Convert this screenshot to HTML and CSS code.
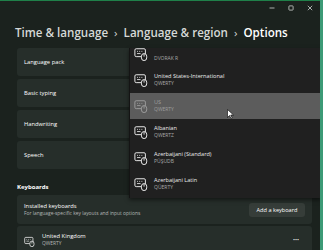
FILE: index.html
```html
<!DOCTYPE html>
<html lang="en">
<head>
    <meta charset="UTF-8">
    <meta name="viewport" content="width=device-width, initial-scale=1.0">
    <title>Options</title>
    <link rel="stylesheet" href="styles.css">
</head>
<body>
    <div class="window">
        <div class="titlebar">
            <svg class="ctl" width="6" height="6" viewBox="0 0 6 6"><path d="M0.5 3h5" stroke="#cfd3d1" stroke-width="0.8"/></svg>
            <svg class="ctl" width="6" height="6" viewBox="0 0 6 6"><rect x="0.9" y="0.9" width="4.2" height="4.2" rx="0.6" fill="none" stroke="#cfd3d1" stroke-width="0.8"/></svg>
            <svg class="ctl" width="6" height="6" viewBox="0 0 6 6"><path d="M0.8 0.8l4.4 4.4M5.2 0.8l-4.4 4.4" stroke="#cfd3d1" stroke-width="0.8"/></svg>
        </div>

        <h1 class="crumbs">
            <span class="crumb">Time &amp; language</span>
            <span class="sep">›</span>
            <span class="crumb">Language &amp; region</span>
            <span class="sep">›</span>
            <span class="crumb current">Options</span>
        </h1>

        <div class="content">
            <div class="card">Language pack</div>
            <div class="card">Basic typing</div>
            <div class="card">Handwriting</div>
            <div class="card">Speech</div>

            <h2 class="section">Keyboards</h2>

            <div class="card card-tall">
                <div class="text">
                    <div class="title">Installed keyboards</div>
                    <div class="sub">For language-specific key layouts and input options</div>
                </div>
                <button class="btn">Add a keyboard</button>
            </div>

            <div class="card card-item">
                <svg class="kb" width="11" height="11" viewBox="0 0 16 16">
                    <rect x="1" y="2" width="12" height="9" rx="1.5" fill="none" stroke="#e6e6e6" stroke-width="1.2"/>
                    <path d="M3.5 5h1M6 5h1M8.5 5h1M3.5 7.5h4" stroke="#e6e6e6" stroke-width="1"/>
                    <rect x="8.5" y="7.5" width="6" height="8" rx="3" fill="#27302b" stroke="#e6e6e6" stroke-width="1.2"/>
                    <path d="M11.5 8v3" stroke="#e6e6e6" stroke-width="1"/>
                </svg>
                <div class="text">
                    <div class="title">United Kingdom</div>
                    <div class="sub">QWERTY</div>
                </div>
                <span class="more">···</span>
            </div>
        </div>

        <div class="flyout">
            <div class="list">
                <div class="row partial">
                    <svg class="kb" width="14" height="14" viewBox="0 0 16 16"><rect x="1" y="2" width="12" height="9" rx="1.5" fill="none" stroke="currentColor" stroke-width="1.1"/><path d="M3.5 5h1M6 5h1M8.5 5h1M3.5 7.5h4" stroke="currentColor" stroke-width="1"/><rect x="8.5" y="7.5" width="6" height="8" rx="3" fill="#202020" stroke="currentColor" stroke-width="1.1"/><path d="M11.5 8v3" stroke="currentColor" stroke-width="1"/></svg>
                    <div class="text"><div class="sub">DVORAK R</div></div>
                </div>
                <div class="row">
                    <svg class="kb" width="14" height="14" viewBox="0 0 16 16"><rect x="1" y="2" width="12" height="9" rx="1.5" fill="none" stroke="currentColor" stroke-width="1.1"/><path d="M3.5 5h1M6 5h1M8.5 5h1M3.5 7.5h4" stroke="currentColor" stroke-width="1"/><rect x="8.5" y="7.5" width="6" height="8" rx="3" fill="#202020" stroke="currentColor" stroke-width="1.1"/><path d="M11.5 8v3" stroke="currentColor" stroke-width="1"/></svg>
                    <div class="text"><div class="title">United States-International</div><div class="sub">QWERTY</div></div>
                </div>
                <div class="row active">
                    <svg class="kb" width="14" height="14" viewBox="0 0 16 16"><rect x="1" y="2" width="12" height="9" rx="1.5" fill="none" stroke="currentColor" stroke-width="1.1"/><path d="M3.5 5h1M6 5h1M8.5 5h1M3.5 7.5h4" stroke="currentColor" stroke-width="1"/><rect x="8.5" y="7.5" width="6" height="8" rx="3" fill="#5c5c5c" stroke="currentColor" stroke-width="1.1"/><path d="M11.5 8v3" stroke="currentColor" stroke-width="1"/></svg>
                    <div class="text"><div class="title">US</div><div class="sub">QWERTY</div></div>
                </div>
                <div class="row">
                    <svg class="kb" width="14" height="14" viewBox="0 0 16 16"><rect x="1" y="2" width="12" height="9" rx="1.5" fill="none" stroke="currentColor" stroke-width="1.1"/><path d="M3.5 5h1M6 5h1M8.5 5h1M3.5 7.5h4" stroke="currentColor" stroke-width="1"/><rect x="8.5" y="7.5" width="6" height="8" rx="3" fill="#202020" stroke="currentColor" stroke-width="1.1"/><path d="M11.5 8v3" stroke="currentColor" stroke-width="1"/></svg>
                    <div class="text"><div class="title">Albanian</div><div class="sub">QWERTZ</div></div>
                </div>
                <div class="row">
                    <svg class="kb" width="14" height="14" viewBox="0 0 16 16"><rect x="1" y="2" width="12" height="9" rx="1.5" fill="none" stroke="currentColor" stroke-width="1.1"/><path d="M3.5 5h1M6 5h1M8.5 5h1M3.5 7.5h4" stroke="currentColor" stroke-width="1"/><rect x="8.5" y="7.5" width="6" height="8" rx="3" fill="#202020" stroke="currentColor" stroke-width="1.1"/><path d="M11.5 8v3" stroke="currentColor" stroke-width="1"/></svg>
                    <div class="text"><div class="title">Azerbaijani (Standard)</div><div class="sub">PÜŞUDB</div></div>
                </div>
                <div class="row">
                    <svg class="kb" width="14" height="14" viewBox="0 0 16 16"><rect x="1" y="2" width="12" height="9" rx="1.5" fill="none" stroke="currentColor" stroke-width="1.1"/><path d="M3.5 5h1M6 5h1M8.5 5h1M3.5 7.5h4" stroke="currentColor" stroke-width="1"/><rect x="8.5" y="7.5" width="6" height="8" rx="3" fill="#202020" stroke="currentColor" stroke-width="1.1"/><path d="M11.5 8v3" stroke="currentColor" stroke-width="1"/></svg>
                    <div class="text"><div class="title">Azerbaijani Latin</div><div class="sub">QÜERTY</div></div>
                </div>
            </div>
        </div>

        <svg class="pointer" width="7" height="10" viewBox="0 0 7 10"><path d="M0.5 0.5v8l2-2 1.5 3 1.2-.6-1.5-2.9h2.8z" fill="#fff" stroke="#000" stroke-width="0.6"/></svg>
    </div>
</body>
</html>
```

FILE: styles.css
```css
body {
    margin: 0;
    width: 323px;
    height: 250px;
    overflow: hidden;
    background-color: #3c9a76;
    font-family: "Open Sans", "Noto Sans", sans-serif;
    color: #ffffff;
}
.window {
    position: relative;
    width: 320px;
    height: 249px;
    border-top: 1px solid #1f8049;
    background-color: #1b221e;
    overflow: hidden;
}
.titlebar {
    height: 14px;
    display: flex;
    justify-content: flex-end;
    align-items: center;
    gap: 13px;
    padding-right: 7px;
}
.crumbs {
    margin: 10px 0 7px 15px;
    font-size: 11.6px;
    line-height: 16px;
    font-weight: 600;
    white-space: nowrap;
    color: #d6d9d7;
}
.crumbs .sep {
    font-weight: 400;
    margin: 0 3px;
}
.crumbs .current {
    color: #ffffff;
}
.content {
    margin: 0 8px 0 17px;
    display: flex;
    flex-direction: column;
    gap: 3px;
}
.card {
    height: 28px;
    padding: 0 7px;
    display: flex;
    align-items: center;
    background-color: #262e2a;
    border-radius: 3px;
    font-size: 5.8px;
}
.section {
    margin: 10px 0 0;
    font-size: 6px;
    line-height: 10px;
    font-weight: 700;
}
.card-tall {
    height: 29px;
    justify-content: space-between;
}
.card-tall + .card {
    margin-top: -1px;
}
.title {
    font-size: 5.8px;
    line-height: 7px;
}
.sub {
    font-size: 4.9px;
    line-height: 7px;
    color: #b4b8b6;
}
.btn {
    width: 56px;
    height: 14px;
    padding: 0;
    border: none;
    border-radius: 3px;
    background-color: #363d39;
    color: #ffffff;
    font-family: inherit;
    font-size: 5.6px;
}
.card-item {
    height: 34px;
    align-items: flex-start;
    padding-top: 7px;
}
.card-item .kb {
    margin: 3px 7px 0 0;
}
.card-item .more {
    margin: 4px 6px 0 auto;
    font-size: 7px;
    line-height: 6px;
    font-weight: 700;
}
.flyout {
    position: absolute;
    left: 129px;
    top: 47px;
    width: 191px;
    height: 150px;
    overflow: hidden;
    background-color: #202020;
    border-left: 1px solid #141414;
    box-shadow: 0 2px 4px rgba(0, 0, 0, 0.5);
}
.list {
    margin-top: -7px;
}
.row {
    height: 26px;
    display: flex;
    align-items: center;
    padding-left: 4px;
    color: #ececec;
}
.row .kb {
    margin-right: 6px;
}
.row .title {
    font-size: 5.6px;
}
.row .sub {
    font-size: 5px;
    color: #a9a9a9;
}
.row.partial .text {
    padding-top: 8px;
}
.row.active {
    background-color: #5c5c5c;
    color: #9c9c9c;
}
.row.active .sub {
    color: #9c9c9c;
}
.pointer {
    position: absolute;
    left: 227px;
    top: 108px;
}
```
